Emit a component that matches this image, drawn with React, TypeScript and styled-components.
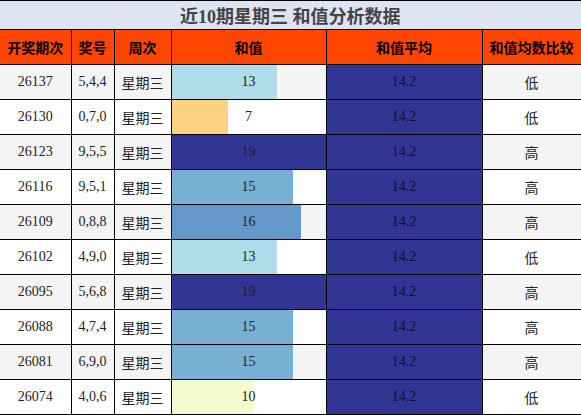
import React from "react";
import styled, { createGlobalStyle } from "styled-components";

const Global = createGlobalStyle`
  html, body { margin: 0; padding: 0; background: #fff; }
  body { font-family: "Liberation Serif", "Noto Sans CJK SC", serif; }
`;

const Table = styled.table`
  width: 581px;
  border-collapse: collapse;
  table-layout: fixed;
  border-top: 1px solid #000;
  border-bottom: 1px solid #000;
`;

const TitleCell = styled.th`
  height: 28px;
  padding: 0;
  background: #dde3f1;
  color: #444;
  font-family: "Liberation Serif", "Noto Sans CJK SC", serif;
  font-weight: bold;
  font-size: 18px;
  text-align: center;
  border-right: 1px solid #000;
  border-bottom: 1px solid #000;
`;

const HeadCell = styled.th`
  height: 34px;
  padding: 0;
  background: #ff4500;
  color: #000;
  font-family: "Noto Sans CJK SC", sans-serif;
  font-weight: bold;
  font-size: 14px;
  text-align: center;
  border: 1px solid #000;
  &:first-child { border-left: none; }
`;

const Row = styled.tr<{ $alt: boolean }>`
  background: ${(p) => (p.$alt ? "#f4f4f4" : "#ffffff")};
`;

const Cell = styled.td<{ $cjk?: boolean }>`
  height: 34px;
  padding: 0;
  text-align: center;
  color: #222;
  font-family: ${(p) =>
    p.$cjk ? '"Noto Sans CJK SC", sans-serif' : '"Liberation Serif", "Noto Sans CJK SC", serif'};
  font-size: 14px;
  border: 1px solid #000;
  &:first-child { border-left: none; }
`;

const AvgCell = styled(Cell)`
  background: #313695;
  color: #10102a;
`;

const BarCell = styled(Cell)`
  position: relative;
`;

const Bar = styled.div`
  position: absolute;
  left: 0;
  top: 0;
  bottom: 0;
`;

const BarLabel = styled.span`
  position: relative;
`;

type Item = { id: string; nums: string; sum: number; cmp: string };

const data: Item[] = [
  { id: "26137", nums: "5,4,4", sum: 13, cmp: "低" },
  { id: "26130", nums: "0,7,0", sum: 7, cmp: "低" },
  { id: "26123", nums: "9,5,5", sum: 19, cmp: "高" },
  { id: "26116", nums: "9,5,1", sum: 15, cmp: "高" },
  { id: "26109", nums: "0,8,8", sum: 16, cmp: "高" },
  { id: "26102", nums: "4,9,0", sum: 13, cmp: "低" },
  { id: "26095", nums: "5,6,8", sum: 19, cmp: "高" },
  { id: "26088", nums: "4,7,4", sum: 15, cmp: "高" },
  { id: "26081", nums: "6,9,0", sum: 15, cmp: "高" },
  { id: "26074", nums: "4,0,6", sum: 10, cmp: "低" },
];

const colorFor = (v: number) => {
  switch (v) {
    case 7:
      return "#fed283";
    case 10:
      return "#f4fbcd";
    case 13:
      return "#aedce9";
    case 15:
      return "#78b0d4";
    case 16:
      return "#6398c8";
    case 19:
      return "#313695";
    default:
      return "#abd9e9";
  }
};

const MAX = 19;

export default function App() {
  return (
    <>
      <Global />
      <Table>
        <colgroup>
          <col style={{ width: 71 }} />
          <col style={{ width: 43 }} />
          <col style={{ width: 57 }} />
          <col style={{ width: 155 }} />
          <col style={{ width: 156 }} />
          <col style={{ width: 99 }} />
        </colgroup>
        <thead>
          <tr>
            <TitleCell colSpan={6}>近10期星期三 和值分析数据</TitleCell>
          </tr>
          <tr>
            <HeadCell>开奖期次</HeadCell>
            <HeadCell>奖号</HeadCell>
            <HeadCell>周次</HeadCell>
            <HeadCell>和值</HeadCell>
            <HeadCell>和值平均</HeadCell>
            <HeadCell>和值均数比较</HeadCell>
          </tr>
        </thead>
        <tbody>
          {data.map((d, i) => (
            <Row key={d.id} $alt={i % 2 === 0}>
              <Cell>{d.id}</Cell>
              <Cell>{d.nums}</Cell>
              <Cell $cjk>星期三</Cell>
              <BarCell>
                <Bar style={{ width: `${(d.sum / MAX) * 100}%`, background: colorFor(d.sum) }} />
                <BarLabel>{d.sum}</BarLabel>
              </BarCell>
              <AvgCell>14.2</AvgCell>
              <Cell $cjk>{d.cmp}</Cell>
            </Row>
          ))}
        </tbody>
      </Table>
    </>
  );
}
